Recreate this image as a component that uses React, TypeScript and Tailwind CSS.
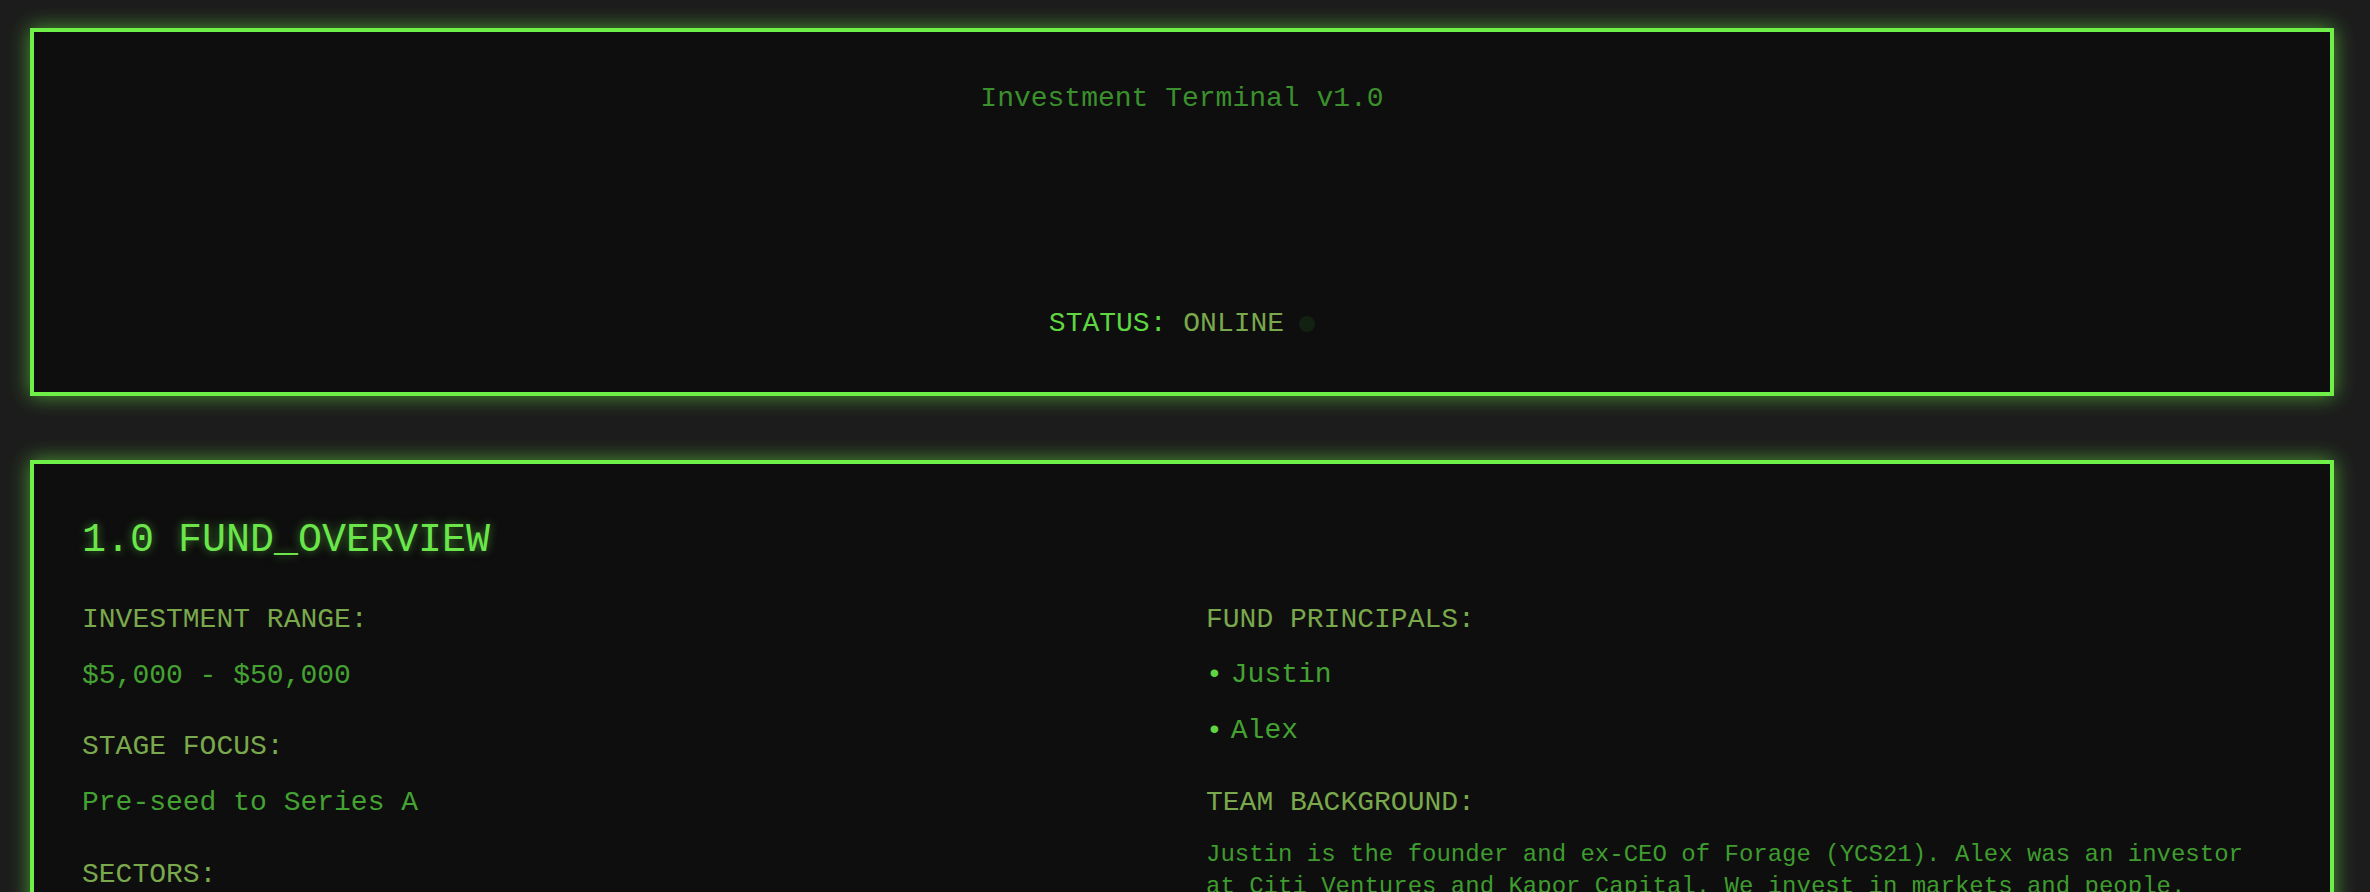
import React from "react";

const label = "text-[28px] leading-[42px] text-[#7aa84c]";
const value = "text-[28px] leading-[42px] text-[#44a232]";

function Bullet({ children }: { children: React.ReactNode }) {
  return (
    <div className="flex items-center text-[28px] leading-[42px]">
      <span className="text-[#5fd641]">•</span>
      <span className="ml-[8px] text-[#44a232]">{children}</span>
    </div>
  );
}

export default function App() {
  return (
    <div className="min-h-screen bg-[#1c1c1c] pt-[28px] pl-[30px] pr-[36px] pb-[48px] font-['Liberation_Mono','Courier_New',monospace]">
      {/* Header panel */}
      <div className="flex h-[368px] flex-col items-center border-4 border-[#6ef048] bg-[#0e0e0e] pt-[46px] shadow-[0_0_20px_rgba(110,240,72,0.6)]">
        <div className="text-[28px] leading-[42px] text-[#3b902d]">Investment Terminal v1.0</div>
        <div className="h-[183px]" />
        <div className="flex items-center text-[28px] leading-[42px] whitespace-pre">
          <span className="text-[#5fd641]">STATUS:</span>
          <span> </span>
          <span className="text-[#7aa84c]">ONLINE</span>
          <span className="ml-[15px] h-4 w-4 rounded-full bg-[#122212]" />
        </div>
      </div>

      {/* Fund overview panel */}
      <div className="mt-16 border-4 border-[#6ef048] bg-[#0e0e0e] px-12 pt-[47px] pb-12 shadow-[0_0_20px_rgba(110,240,72,0.6)]">
        <h2 className="mb-[28px] text-[40px] leading-[60px] text-[#6ae64a] [text-shadow:0_0_10px_rgba(106,230,74,0.55)]">
          1.0 FUND_OVERVIEW
        </h2>
        <div className="grid grid-cols-2 gap-x-12">
          <div className="flex flex-col">
            <div className={label}>INVESTMENT RANGE:</div>
            <div className={`mt-[14px] ${value}`}>$5,000 - $50,000</div>
            <div className={`mt-[29px] ${label}`}>STAGE FOCUS:</div>
            <div className={`mt-[14px] ${value}`}>Pre-seed to Series A</div>
            <div className={`mt-[30px] ${label}`}>SECTORS:</div>
            <div className={`mt-[14px] ${value}`}>Software, Marketplaces</div>
          </div>
          <div className="flex flex-col">
            <div className={label}>FUND PRINCIPALS:</div>
            <div className="mt-[13px]">
              <Bullet>Justin</Bullet>
            </div>
            <div className="mt-[14px]">
              <Bullet>Alex</Bullet>
            </div>
            <div className={`mt-[30px] ${label}`}>TEAM BACKGROUND:</div>
            <p className="mt-[15px] text-[24px] leading-[32px] text-[#3f9c2e]">
              Justin is the founder and ex-CEO of Forage (YCS21). Alex was an investor at Citi Ventures and Kapor
              Capital. We invest in markets and people.
            </p>
          </div>
        </div>
      </div>
    </div>
  );
}
